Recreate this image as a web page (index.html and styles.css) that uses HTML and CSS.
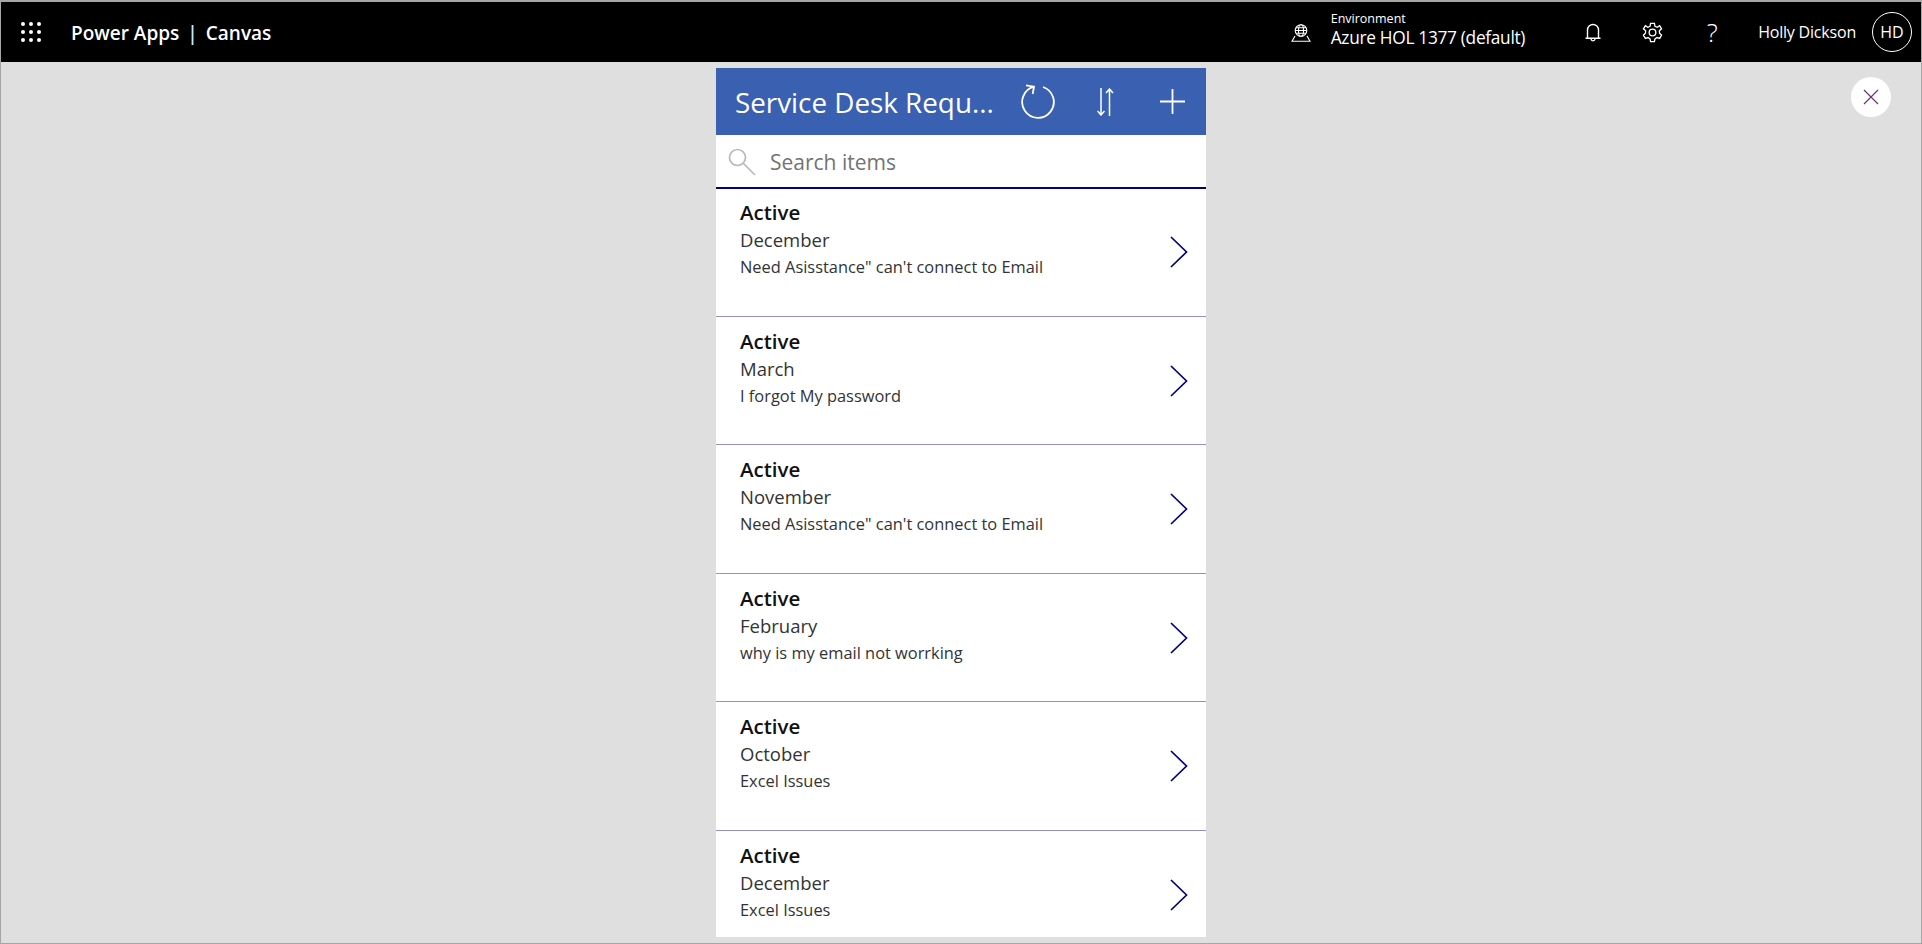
FILE: index.html
```html
<!DOCTYPE html>
<html lang="en">
<head>
    <meta charset="UTF-8">
    <title>Power Apps | Canvas</title>
    <link rel="stylesheet" href="styles.css">
</head>
<body>
    <header class="topbar">
        <svg class="waffle" width="20" height="20" viewBox="0 0 20 20" fill="#fff">
            <circle cx="2" cy="2" r="2"/><circle cx="10" cy="2" r="2"/><circle cx="18" cy="2" r="2"/>
            <circle cx="2" cy="10" r="2"/><circle cx="10" cy="10" r="2"/><circle cx="18" cy="10" r="2"/>
            <circle cx="2" cy="18" r="2"/><circle cx="10" cy="18" r="2"/><circle cx="18" cy="18" r="2"/>
        </svg>
        <div class="brand">Power Apps<span class="brand-sep">|</span>Canvas</div>
        <svg class="env-icon" width="20" height="18" viewBox="0 0 20 18" fill="none" stroke="#fff" stroke-width="1.1">
            <circle cx="10" cy="6.500" r="5.800"/>
            <ellipse cx="10" cy="6.500" rx="2.500" ry="5.800"/>
            <path d="M4.200 6.500h11.600M5 3.700h10M5 9.300h10M4 12 1 17.300h18L16 12"/>
        </svg>
        <div class="env">
            <div class="env-label">Environment</div>
            <div class="env-name">Azure HOL 1377 (default)</div>
        </div>
        <svg class="bell" width="16" height="19" viewBox="0 0 16 19" fill="none" stroke="#fff" stroke-width="1.400">
            <path d="M2.500 15V7a5.500 5.500 0 0 1 11 0v8M.5 15.300h15M6 16c.3 2.500 3.700 2.500 4 0"/>
        </svg>
        <svg class="gear" width="21" height="21" viewBox="0 0 22 22" fill="none" stroke="#fff" stroke-width="1.400">
            <circle cx="11" cy="11" r="3.500"/>
            <path d="M9 1.500h4l.6 3 2.300 1 2.600-1.700 2 3.400-2.300 2 .2 2.600 2.100 2-2 3.400-2.800-.9-2.100 1.400-.6 2.800H9l-.6-2.800-2.100-1.400-2.800.9-2-3.400 2.100-2 .2-2.600-2.300-2 2-3.400 2.600 1.700 2.300-1z"/>
        </svg>
        <div class="help">?</div>
        <div class="user">Holly Dickson</div>
        <div class="avatar">HD</div>
    </header>

    <main class="stage">
        <div class="phone">
            <div class="app-head">
                <div class="app-title">Service Desk Requ...</div>
                <svg class="head-icon refresh" width="36" height="36" viewBox="0 0 36 36" fill="none" stroke="#fff" stroke-width="1.800">
                    <path d="M14 2.700A15.800 15.800 0 1 0 23 3M6 1.300l8 1.400-1.300 7.300"/>
                </svg>
                <svg class="head-icon sort" width="17" height="28" viewBox="0 0 17 28" fill="none" stroke="#fff" stroke-width="1.500">
                    <path d="M4 0v27M.5 23 4 27l3.500-4M12.500 28V1M9 5l3.500-4L16 5"/>
                </svg>
                <svg class="head-icon plus" width="25" height="25" viewBox="0 0 25 25" fill="none" stroke="#fff" stroke-width="1.800">
                    <path d="M12.500 0v25M0 12.500h25"/>
                </svg>
            </div>
            <div class="search">
                <svg width="28" height="28" viewBox="0 0 28 28" fill="none" stroke="#b9b9b9" stroke-width="1.700">
                    <circle cx="9.500" cy="9.500" r="8"/>
                    <path d="M15.500 15.500 27 27"/>
                </svg>
                <span class="search-text">Search items</span>
            </div>
            <div class="list">
                <div class="row">
                    <div class="row-text">
                        <div class="status">Active</div>
                        <div class="month">December</div>
                        <div class="desc">Need Asisstance" can't connect to Email</div>
                    </div>
                    <svg class="chev" width="18" height="32" viewBox="0 0 18 32" fill="none" stroke="#000080" stroke-width="1.700"><path d="M1 1l15.500 15L1 31"/></svg>
                </div>
                <div class="row">
                    <div class="row-text">
                        <div class="status">Active</div>
                        <div class="month">March</div>
                        <div class="desc">I forgot My password</div>
                    </div>
                    <svg class="chev" width="18" height="32" viewBox="0 0 18 32" fill="none" stroke="#000080" stroke-width="1.700"><path d="M1 1l15.500 15L1 31"/></svg>
                </div>
                <div class="row">
                    <div class="row-text">
                        <div class="status">Active</div>
                        <div class="month">November</div>
                        <div class="desc">Need Asisstance" can't connect to Email</div>
                    </div>
                    <svg class="chev" width="18" height="32" viewBox="0 0 18 32" fill="none" stroke="#000080" stroke-width="1.700"><path d="M1 1l15.500 15L1 31"/></svg>
                </div>
                <div class="row">
                    <div class="row-text">
                        <div class="status">Active</div>
                        <div class="month">February</div>
                        <div class="desc">why is my email not worrking</div>
                    </div>
                    <svg class="chev" width="18" height="32" viewBox="0 0 18 32" fill="none" stroke="#000080" stroke-width="1.700"><path d="M1 1l15.500 15L1 31"/></svg>
                </div>
                <div class="row">
                    <div class="row-text">
                        <div class="status">Active</div>
                        <div class="month">October</div>
                        <div class="desc">Excel Issues</div>
                    </div>
                    <svg class="chev" width="18" height="32" viewBox="0 0 18 32" fill="none" stroke="#000080" stroke-width="1.700"><path d="M1 1l15.500 15L1 31"/></svg>
                </div>
                <div class="row last">
                    <div class="row-text">
                        <div class="status">Active</div>
                        <div class="month">December</div>
                        <div class="desc">Excel Issues</div>
                    </div>
                    <svg class="chev" width="18" height="32" viewBox="0 0 18 32" fill="none" stroke="#000080" stroke-width="1.700"><path d="M1 1l15.500 15L1 31"/></svg>
                </div>
            </div>
        </div>
        <div class="close-btn">
            <svg width="16" height="16" viewBox="0 0 16 16" fill="none" stroke="#742774" stroke-width="1.100"><path d="M1 1l14 14M15 1 1 15"/></svg>
        </div>
    </main>
</body>
</html>
```

FILE: styles.css
```css
html, body {
    margin: 0;
    height: 100%;
    overflow: hidden;
}
body {
    font-family: "Open Sans", sans-serif;
    background: #dfdfdf;
    border: 1px solid #a6a6a6;
    border-top-width: 2px;
    box-sizing: border-box;
}
.topbar {
    height: 60px;
    background: #000;
    color: #fff;
    display: flex;
    align-items: center;
    padding-right: 9px;
}
.waffle {
    margin-left: 20px;
}
.brand {
    margin-left: 30px;
    padding-top: 1px;
    font-size: 19px;
    font-weight: 600;
    flex: 1;
}
.brand-sep {
    margin: 0 8px;
    color: #bdeeff;
}
.env-icon {
    margin-right: 20px;
    margin-top: 1px;
}
.env {
    margin-bottom: 4px;
}
.env-label {
    font-size: 12.500px;
    line-height: 15px;
}
.env-name {
    font-size: 17.300px;
    line-height: 23px;
    letter-spacing: -0.3px;
}
.bell {
    margin-left: 60px;
}
.gear {
    margin-left: 41px;
}
.help {
    margin-left: 41px;
    font-weight: 300;
    font-size: 26px;
    width: 16px;
    text-align: center;
}
.user {
    margin-left: 38px;
    font-size: 16px;
    letter-spacing: -0.2px;
}
.avatar {
    margin-left: 16px;
    width: 40px;
    height: 40px;
    border: 1px solid #fff;
    border-radius: 50%;
    box-sizing: border-box;
    display: flex;
    align-items: center;
    justify-content: center;
    font-size: 16px;
}
.stage {
    position: relative;
    display: flex;
    justify-content: center;
    padding-top: 6px;
}
.phone {
    width: 490px;
    background: #fff;
}
.app-head {
    height: 67px;
    background: #3a60b2;
    display: flex;
    align-items: center;
    color: #fff;
}
.app-title {
    flex: 1;
    margin-left: 19px;
    font-size: 27.800px;
    white-space: nowrap;
}
.refresh {
    margin-right: 41px;
}
.sort {
    margin-right: 46px;
}
.plus {
    margin-right: 21px;
}
.search {
    height: 51px;
    display: flex;
    align-items: center;
    padding-left: 12px;
    padding-top: 1px;
    border-bottom: 2px solid #000080;
}
.search-text {
    margin-left: 14px;
    font-size: 21px;
    color: #737373;
}
.row {
    height: 128.600px;
    box-sizing: border-box;
    padding: 10px 18px 0 24px;
    border-bottom: 1px solid #8f94c4;
    display: flex;
    justify-content: space-between;
}
.row:first-child {
    height: 127.500px;
    padding-top: 8.500px;
}
.row.last {
    height: 106px;
    border-bottom: 0;
}
.status {
    font-size: 20.500px;
    font-weight: 600;
    line-height: 29px;
    color: #111;
}
.month {
    font-size: 18.500px;
    line-height: 26px;
    color: #333;
}
.desc {
    font-size: 16.400px;
    line-height: 28px;
    color: #333;
}
.chev {
    margin-top: 38px;
}
.close-btn {
    position: absolute;
    top: 15px;
    right: 30px;
    width: 40px;
    height: 40px;
    background: #fff;
    border-radius: 50%;
    display: flex;
    align-items: center;
    justify-content: center;
}
```
